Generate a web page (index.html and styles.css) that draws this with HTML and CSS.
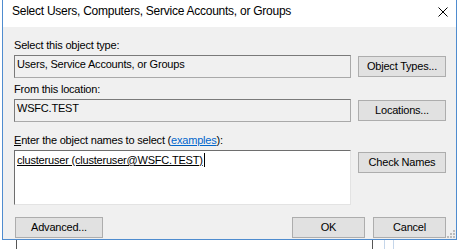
FILE: index.html
```html
<!DOCTYPE html>
<html lang="en">
<head>
    <meta charset="UTF-8">
    <title>Select Users, Computers, Service Accounts, or Groups</title>
    <link rel="stylesheet" href="styles.css">
</head>
<body>
    <div class="window">
        <div class="titlebar">
            <span class="title">Select Users, Computers, Service Accounts, or Groups</span>
            <svg class="close" width="10" height="10" viewBox="0 0 10 10">
                <path d="M0.5 0.5 L9.5 9.5 M9.5 0.5 L0.5 9.5" stroke="#000" stroke-width="1" fill="none"/>
            </svg>
        </div>

        <div class="dialog">
            <div class="label">Select this object type:</div>
            <div class="row">
                <div class="field readonly">Users, Service Accounts, or Groups</div>
                <button class="btn">Object Types...</button>
            </div>

            <div class="label label-location">From this location:</div>
            <div class="row">
                <div class="field readonly">WSFC.TEST</div>
                <button class="btn">Locations...</button>
            </div>

            <div class="label label-names"><u>E</u>nter the object names to select (<a href="#" class="link">examples</a>):</div>
            <div class="row">
                <div class="field names"><span class="entry">clusteruser (clusteruser@WSFC.TEST)</span><span class="caret"></span></div>
                <button class="btn btn-check">Check Names</button>
            </div>

            <div class="actions">
                <button class="btn btn-advanced">Advanced...</button>
                <div class="spacer"></div>
                <button class="btn btn-small">OK</button>
                <button class="btn btn-small">Cancel</button>
            </div>

            <svg class="grip" width="8" height="8" viewBox="0 0 8 8">
                <rect x="6" y="0" width="2" height="2" fill="#bcbcbc"/>
                <rect x="3" y="3" width="2" height="2" fill="#bcbcbc"/>
                <rect x="6" y="3" width="2" height="2" fill="#bcbcbc"/>
                <rect x="0" y="6" width="2" height="2" fill="#bcbcbc"/>
                <rect x="3" y="6" width="2" height="2" fill="#bcbcbc"/>
                <rect x="6" y="6" width="2" height="2" fill="#bcbcbc"/>
            </svg>
        </div>
    </div>

    <div class="under">
        <div class="under-line"></div>
        <div class="under-line under-line-right"></div>
        <div class="under-box"></div>
    </div>
</body>
</html>
```

FILE: styles.css
```css
body {
    margin: 0;
    background-color: #fff;
    font-family: "Liberation Sans", Arial, sans-serif;
    font-size: 11px;
    letter-spacing: -0.2px;
    color: #000;
}
.window {
    margin-left: 2px;
    width: 455px;
    box-sizing: border-box;
    border: 1px solid #4f8ccf;
    border-top: none;
}
.titlebar {
    height: 27px;
    background-color: #fff;
    display: flex;
    justify-content: space-between;
    align-items: flex-start;
    padding: 0 8px 0 9px;
}
.title {
    font-size: 12px;
    letter-spacing: -0.25px;
    line-height: 14px;
    margin-top: 4px;
}
.close {
    margin-top: 7px;
}
.dialog {
    position: relative;
    background-color: #f0f0f0;
    padding: 12px 10px 1px 11px;
}
.label {
    line-height: 13px;
    margin-bottom: 3px;
}
.label-location {
    margin-top: 5px;
}
.label-names {
    margin-top: 12px;
}
.link {
    color: #0066cc;
}
.row {
    display: flex;
    gap: 7px;
    align-items: flex-start;
}
.field {
    width: 337px;
    height: 23px;
    box-sizing: border-box;
    padding: 2px 2px 0 2px;
    line-height: 13px;
    white-space: nowrap;
}
.readonly {
    background-color: #f0f0f0;
    border: 1px solid;
    border-color: #7a7a7a #a9a9a9 #a9a9a9 #7a7a7a;
}
.names {
    height: 55px;
    background-color: #fff;
    padding-top: 3px;
    border: 1px solid;
    border-color: #6e6e6e #e3e3e3 #e3e3e3 #6e6e6e;
    display: flex;
    align-items: flex-start;
}
.entry {
    text-decoration: underline;
}
.caret {
    width: 1px;
    height: 14px;
    margin-top: -1px;
    margin-left: 1px;
    background-color: #000;
}
.btn {
    width: 88px;
    height: 21px;
    margin-top: 1px;
    padding: 0;
    box-sizing: border-box;
    border: 1px solid #adadad;
    background-color: #e1e1e1;
    font-family: inherit;
    font-size: 11px;
    letter-spacing: -0.2px;
    color: #000;
    line-height: 13px;
}
.btn-check {
    margin-top: 2px;
}
.actions {
    display: flex;
    gap: 8px;
    margin-top: 12px;
}
.btn-advanced {
    margin: 0 0 0 1px;
    width: 88px;
}
.btn-small {
    margin: 0;
    width: 73px;
}
.spacer {
    flex-grow: 1;
}
.grip {
    position: absolute;
    right: 1px;
    bottom: 1px;
}
.under {
    display: flex;
    height: 10px;
}
.under-line {
    width: 1px;
    background-color: #555;
    margin-left: 16px;
}
.under-line-right {
    margin-left: 355px;
}
.under-box {
    width: 8px;
    margin-left: 11px;
    border-left: 1px solid #c5d6ea;
    border-right: 1px solid #c5d6ea;
}
```
